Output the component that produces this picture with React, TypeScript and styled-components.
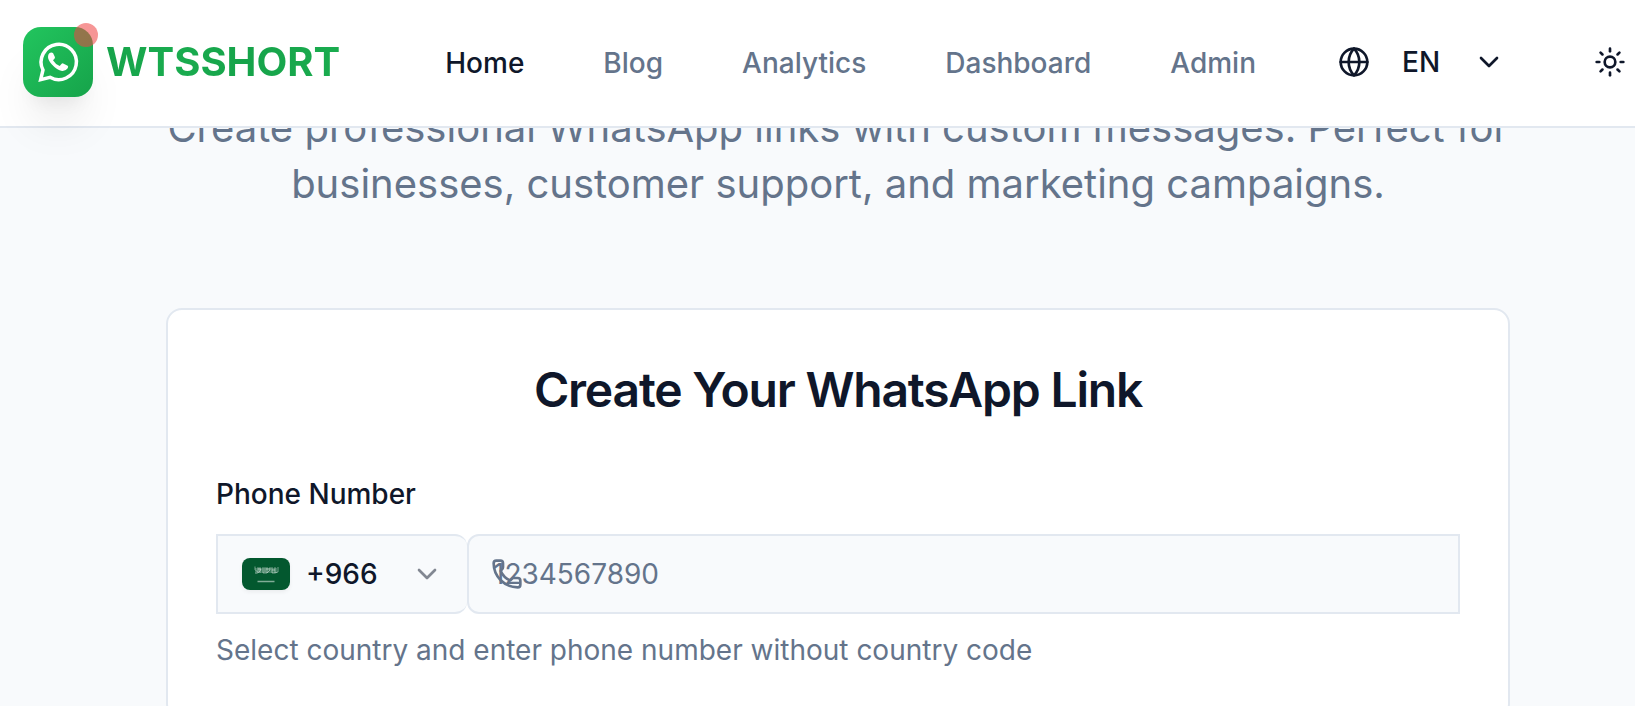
import React from "react";
import styled, { createGlobalStyle } from "styled-components";
import { ChevronDown, Globe, Phone, Sun } from "lucide-react";

const GlobalStyle = createGlobalStyle`
  *, *::before, *::after { box-sizing: border-box; }
  html { overflow: hidden; }
  body {
    margin: 0;
    background: #f8fafc;
    color: #0f172a;
    font-family: Inter, "Liberation Sans", sans-serif;
    font-size: 32px;
    line-height: 48px;
  }
`;

const Header = styled.header`
  position: sticky;
  top: 0;
  z-index: 10;
  display: flex;
  align-items: center;
  height: 128px;
  padding: 0 9px 2px 23px;
  border-bottom: 2px solid #e2e8f0;
  background: #fff;
  white-space: nowrap;
`;

const Brand = styled.a`
  display: flex;
  align-items: center;
  gap: 13px;
  text-decoration: none;
`;

const LogoTile = styled.span`
  position: relative;
  display: flex;
  width: 70px;
  height: 70px;
  border-radius: 18px;
  background: linear-gradient(135deg, #22c55e, #16a34a);
  box-shadow: 0 35px 44px -9px rgba(0, 0, 0, 0.08), 0 14px 18px -11px rgba(0, 0, 0, 0.08);
`;

const StatusDot = styled.span`
  position: absolute;
  top: -4px;
  right: -5px;
  width: 24px;
  height: 24px;
  border-radius: 50%;
  background: #ef4444;
  opacity: 0.56;
`;

const BrandName = styled.span`
  font-size: 40px;
  font-weight: 700;
  background: linear-gradient(90deg, #16a34a, #1aac4f 30%, #16a34a 60%, #1aac4f);
  background-clip: text;
  color: transparent;
`;

const Nav = styled.nav`
  display: flex;
  gap: 79px;
  margin-left: 105px;
  padding-top: 2px;
`;

const NavLink = styled.a<{ $active?: boolean }>`
  color: ${({ $active }) => ($active ? "#0f172a" : "#64748b")};
  font-size: 28px;
  font-weight: 500;
  text-decoration: none;
`;

const LanguagePicker = styled.label`
  display: flex;
  align-items: center;
  gap: 32px;
  margin-left: 82px;
`;

const PlainSelect = styled.select`
  appearance: none;
  min-width: 0;
  padding: 0;
  border: 0;
  outline: 0;
  background: transparent;
  color: #0f172a;
  font: 500 28px/40px Inter, "Liberation Sans", sans-serif;
`;

const IconButton = styled.button`
  display: flex;
  margin-left: auto;
  padding: 0;
  border: 0;
  background: transparent;
  color: #0f172a;
`;

const Main = styled.main`
  margin-top: -28px;
  padding: 0 125px 0 166px;
`;

const Intro = styled.p`
  max-width: 1344px;
  margin: 0 auto 96px;
  color: #64748b;
  font-size: 40px;
  line-height: 56px;
  text-align: center;
`;

const Card = styled.form`
  max-width: 1344px;
  margin: 0 auto;
  padding: 48px;
  border: 2px solid #e2e8f0;
  border-radius: 16px;
  background: #fff;
`;

const CardTitle = styled.h2`
  margin: 0 0 48px;
  font-size: 48px;
  font-weight: 600;
  line-height: 64px;
  letter-spacing: -0.025em;
  text-align: center;
`;

const FieldLabel = styled.label`
  display: block;
  font-size: 28px;
  font-weight: 500;
`;

const PhoneRow = styled.div`
  display: flex;
  height: 80px;
  margin: 16px 0;
`;

const CountryPicker = styled.div`
  display: flex;
  align-items: center;
  width: 251px;
  padding: 0 24px;
  border: 2px solid #e2e8f0;
  border-right: 0;
  border-radius: 0 12px 12px 0;
  background: #f8fafc;

  select {
    flex: 1;
    margin-left: 16px;
  }

  > svg:last-child {
    flex: none;
    opacity: 0.5;
  }
`;

const Flag = styled.svg`
  flex: none;
  border-radius: 8px;
  box-shadow: 0 2px 4px rgba(0, 0, 0, 0.06);
`;

const NumberField = styled.div`
  position: relative;
  flex: 1;
  color: #64748b;

  > svg {
    position: absolute;
    top: 24px;
    left: 24px;
    pointer-events: none;
  }
`;

const NumberInput = styled.input`
  width: 100%;
  height: 100%;
  padding: 0 24px;
  border: 2px solid #e2e8f0;
  border-radius: 12px 0 0 12px;
  outline: 0;
  background: #f8fafc;
  color: #0f172a;
  font: 400 28px/40px Inter, "Liberation Sans", sans-serif;

  &::placeholder {
    color: #64748b;
    opacity: 1;
  }
`;

const Hint = styled.p`
  margin: 0;
  color: #64748b;
  font-size: 28px;
  line-height: 40px;
`;

const links = ["Home", "Blog", "Analytics", "Dashboard", "Admin"];

function ChatLogo() {
  return (
    <svg width="70" height="70" viewBox="24 36 210 210" aria-hidden="true">
      <path
        d="M77 194 L84 165 A53 53 0 1 1 105 187 Z"
        fill="none"
        stroke="#fff"
        strokeWidth="10.500"
      />
      <path
        d="M103 115 Q108 111 114 114 L120 127 Q120 131 114 136 Q121 148 134 153 L140 146 Q143 144 146 146 L158 152 Q161 154 158 160 Q152 169 141 168 Q126 166 110 148 Q99 135 99 126 Q99 119 103 115 Z"
        fill="#fff"
      />
    </svg>
  );
}

function SaudiFlag() {
  return (
    <Flag width="48" height="32" viewBox="0 0 48 32" aria-hidden="true">
      <rect width="48" height="32" fill="#03582f" />
      <g fill="none" stroke="#fff">
        <path
          d="M13 8.500v3l3 3V9m2 0v6m-5 0c2 1 5-1 6-4m2-2v6h4V9m-2 0v5m5-5v3l-3 3m5-6v6h3V9m3 0v5l-3 1m-17-4h3m5 0h4m2 1h3"
          opacity="0.45"
        />
        <path d="M13 12.500h22" strokeWidth="5" opacity="0.22" />
        <path d="M15.500 23.500h17" strokeWidth="1.500" opacity="0.5" />
      </g>
    </Flag>
  );
}

export default function App() {
  return (
    <>
      <GlobalStyle />
      <Header>
        <Brand href="#">
          <LogoTile>
            <ChatLogo />
            <StatusDot />
          </LogoTile>
          <BrandName>WTSSHORT</BrandName>
        </Brand>
        <Nav aria-label="Main">
          {links.map((name, i) => (
            <NavLink key={name} href="#" $active={i === 0}>
              {name}
            </NavLink>
          ))}
        </Nav>
        <LanguagePicker>
          <Globe size={32} aria-hidden="true" />
          <PlainSelect aria-label="Language">
            <option>EN</option>
          </PlainSelect>
          <ChevronDown size={32} aria-hidden="true" />
        </LanguagePicker>
        <IconButton type="button" aria-label="Toggle theme">
          <Sun size={32} />
        </IconButton>
      </Header>
      <Main>
        <Intro>
          Create professional WhatsApp links with custom messages. Perfect for businesses, customer
          support, and marketing campaigns.
        </Intro>
        <Card>
          <CardTitle>Create Your WhatsApp Link</CardTitle>
          <FieldLabel htmlFor="phone">Phone Number</FieldLabel>
          <PhoneRow>
            <CountryPicker>
              <SaudiFlag />
              <PlainSelect aria-label="Country code">
                <option>+966</option>
              </PlainSelect>
              <ChevronDown size={32} aria-hidden="true" />
            </CountryPicker>
            <NumberField>
              <NumberInput id="phone" type="tel" placeholder="1234567890" />
              <Phone size={32} aria-hidden="true" />
            </NumberField>
          </PhoneRow>
          <Hint>Select country and enter phone number without country code</Hint>
        </Card>
      </Main>
    </>
  );
}
